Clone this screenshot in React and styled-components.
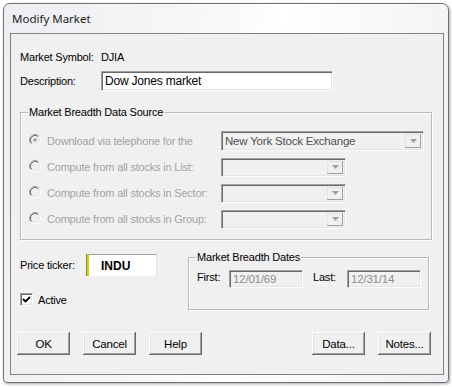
import React from "react";
import styled, { createGlobalStyle } from "styled-components";

const GlobalStyle = createGlobalStyle`
  *, *::before, *::after { box-sizing: border-box; margin: 0; padding: 0; }
  html, body { background: #ffffff; }
  body {
    font-family: "Liberation Sans", Arial, sans-serif;
    font-size: 11px;
    letter-spacing: -0.2px;
    color: #000;
  }
  #root { width: 452px; height: 387px; overflow: hidden; }
`;

const Frame = styled.div`
  margin: 3px 0 0 3px;
  width: 446px;
  height: 380px;
  border: 1px solid #6f6f6f;
  border-radius: 7px 7px 4px 4px;
  background: linear-gradient(100deg, #eceef1 0%, #f8f9fa 45%, #ffffff 55%, #eef0f3 100%);
  box-shadow: 1px 1px 3px rgba(0, 0, 0, 0.35);
  padding: 0 4px 0 6px;
  display: flex;
  flex-direction: column;
`;

const TitleBar = styled.div`
  height: 29px;
  display: flex;
  align-items: center;
  padding-left: 2px;
  font-family: "Noto Sans", "Open Sans", sans-serif;
  font-size: 11.5px;
  letter-spacing: 0;
  color: #1b1b1b;
`;

const Panel = styled.div`
  width: 434px;
  height: 342px;
  border: 1px solid #838383;
  background: #f0f0f0;
  display: flex;
  flex-direction: column;
`;

const Form = styled.div`
  padding-left: 9px;
  display: flex;
  flex-direction: column;
`;

const Row = styled.div`
  display: flex;
  align-items: center;
  height: ${(p) => p.$h || 14}px;
  margin-top: ${(p) => p.$mt || 0}px;
`;

const Label = styled.span`
  width: ${(p) => p.$w}px;
  flex: none;
  white-space: nowrap;
  color: ${(p) => (p.$disabled ? "#a3a3a3" : "#000")};
`;

const sunken = `
  border-style: solid;
  border-width: 1px;
  border-color: #a0a0a0 #ffffff #ffffff #a0a0a0;
  box-shadow: inset 1px 1px 0 #696969, inset -1px -1px 0 #e3e3e3;
`;

const TextBox = styled.div`
  ${sunken}
  width: ${(p) => p.$w}px;
  height: ${(p) => p.$h}px;
  background: ${(p) => (p.$disabled ? "#f0f0f0" : "#ffffff")};
  color: ${(p) => (p.$disabled ? "#8d8d8d" : "#000")};
  display: flex;
  align-items: center;
  padding-left: 3px;
  font-size: ${(p) => (p.$disabled ? 11.5 : 12)}px;
  flex: none;
`;

const GroupBox = styled.div`
  position: relative;
  border: 1px solid #b9b9b9;
  box-shadow: inset 1px 1px 0 #fff, 1px 1px 0 #fff;
  width: ${(p) => p.$w}px;
  height: ${(p) => p.$h}px;
  margin-top: ${(p) => p.$mt || 0}px;
  flex: none;
`;

const Legend = styled.span`
  position: absolute;
  top: -8px;
  left: 7px;
  padding: 0 1px;
  background: #f0f0f0;
  line-height: 14px;
  white-space: nowrap;
`;

const SourceRows = styled.div`
  padding: 18px 0 0 8px;
  display: flex;
  flex-direction: column;
  gap: 6px;
`;

const SourceRow = styled.div`
  display: flex;
  align-items: center;
  height: 20px;
`;

const RadioWrap = styled.span`
  width: 18px;
  height: 12px;
  flex: none;
  display: flex;
  margin-top: -3px;
`;

const Combo = styled.div`
  ${sunken}
  width: ${(p) => p.$w}px;
  height: ${(p) => p.$h}px;
  background: #f0f0f0;
  display: flex;
  align-items: center;
  padding: 2px 2px 2px 3px;
  flex: none;
`;

const ComboText = styled.span`
  flex: 1;
  color: #4f4f4f;
  font-size: 11.5px;
  white-space: nowrap;
`;

const ComboButton = styled.span`
  width: 16px;
  height: 100%;
  background: #f0f0f0;
  box-shadow: inset -1px -1px 0 #a0a0a0, inset 1px 1px 0 #e3e3e3;
  display: flex;
  align-items: center;
  justify-content: center;
  flex: none;
`;

const Bottom = styled.div`
  display: flex;
  align-items: flex-start;
  margin-top: 14px;
`;

const LeftCol = styled.div`
  width: 168px;
  flex: none;
  display: flex;
  flex-direction: column;
`;

const Ticker = styled.div`
  width: 70px;
  height: 22px;
  background: #ffffff;
  border-top: 1px solid #a0a0a0;
  border-right: 1px solid #e3e3e3;
  border-left: 2px solid #d2d20a;
  box-shadow: -1px 0 0 #8a8a30;
  display: flex;
  align-items: center;
  padding-left: 12px;
  font-weight: bold;
  font-size: 12px;
  letter-spacing: 0;
`;

const CheckBox = styled.span`
  ${sunken}
  width: 13px;
  height: 13px;
  background: #fff;
  display: flex;
  align-items: center;
  justify-content: center;
  margin-right: 5px;
  flex: none;
`;

const DatesRow = styled.div`
  display: flex;
  align-items: flex-start;
  padding: 12px 0 0 8px;
`;

const DateLabel = styled.span`
  width: ${(p) => p.$w}px;
  line-height: 14px;
  flex: none;
  margin-left: ${(p) => p.$ml || 0}px;
`;

const ButtonRow = styled.div`
  display: flex;
  gap: 13px;
  padding: 0 12px 0 6px;
  margin-top: 22px;
`;

const Spacer = styled.div`
  flex: 1;
`;

const Button = styled.button`
  width: 53px;
  height: 23px;
  background: #f0f0f0;
  border: none;
  font-family: inherit;
  font-size: 11.5px;
  letter-spacing: -0.2px;
  color: #000;
  box-shadow: inset -1px -1px 0 #696969, inset 1px 1px 0 #ffffff,
    inset -2px -2px 0 #a0a0a0, inset 2px 2px 0 #e3e3e3;
`;

function Radio({ checked }) {
  return (
    <svg width="12" height="12" viewBox="0 0 12 12">
      <circle cx="6" cy="6" r="4" fill="#f0f0f0" />
      <path d="M2.11 9.89 A5.5 5.5 0 0 1 9.89 2.11" stroke="#a0a0a0" fill="none" />
      <path d="M9.89 2.11 A5.5 5.5 0 0 1 2.11 9.89" stroke="#ffffff" fill="none" />
      <path d="M2.82 9.18 A4.5 4.5 0 0 1 9.18 2.82" stroke="#696969" fill="none" />
      <path d="M9.18 2.82 A4.5 4.5 0 0 1 2.82 9.18" stroke="#e3e3e3" fill="none" />
      {checked && <circle cx="6" cy="6" r="1.8" fill="#a0a0a0" />}
    </svg>
  );
}

function Arrow() {
  return (
    <svg width="7" height="4" viewBox="0 0 7 4">
      <path d="M0 0 H7 L3.5 4 Z" fill="#a0a0a0" />
    </svg>
  );
}

function Check() {
  return (
    <svg width="9" height="9" viewBox="0 0 9 9">
      <path d="M1 4 L3.5 6.5 L8 2" stroke="#000" strokeWidth="1.8" fill="none" />
    </svg>
  );
}

const sources = [
  { label: "Download via telephone for the", value: "New York Stock Exchange", w: 203, h: 20, checked: true },
  { label: "Compute from all stocks in List:", value: "", w: 125, h: 19 },
  { label: "Compute from all stocks in Sector:", value: "", w: 125, h: 19 },
  { label: "Compute from all stocks in Group:", value: "", w: 125, h: 19 },
];

export default function App() {
  return (
    <>
      <GlobalStyle />
      <Frame>
        <TitleBar>Modify Market</TitleBar>
        <Panel>
          <Form>
            <Row $mt={16}>
              <Label $w={81}>Market Symbol:</Label>
              <span>DJIA</span>
            </Row>
            <Row $mt={7} $h={20}>
              <Label $w={81}>Description:</Label>
              <TextBox $w={232} $h={20}>Dow Jones market</TextBox>
            </Row>

            <GroupBox $w={412} $h={128} $mt={21}>
              <Legend>Market Breadth Data Source</Legend>
              <SourceRows>
                {sources.map((s) => (
                  <SourceRow key={s.label}>
                    <RadioWrap>
                      <Radio checked={s.checked} />
                    </RadioWrap>
                    <Label $w={174} $disabled>
                      {s.label}
                    </Label>
                    <Combo $w={s.w} $h={s.h}>
                      <ComboText>{s.value}</ComboText>
                      <ComboButton>
                        <Arrow />
                      </ComboButton>
                    </Combo>
                  </SourceRow>
                ))}
              </SourceRows>
            </GroupBox>

            <Bottom>
              <LeftCol>
                <Row $h={22}>
                  <Label $w={67}>Price ticker:</Label>
                  <Ticker>INDU</Ticker>
                </Row>
                <Row $mt={17} $h={13}>
                  <CheckBox>
                    <Check />
                  </CheckBox>
                  <span>Active</span>
                </Row>
              </LeftCol>
              <GroupBox $w={241} $h={53} $mt={3}>
                <Legend>Market Breadth Dates</Legend>
                <DatesRow>
                  <DateLabel $w={32}>First:</DateLabel>
                  <TextBox $w={74} $h={18} $disabled>
                    12/01/69
                  </TextBox>
                  <DateLabel $w={34} $ml={10}>
                    Last:
                  </DateLabel>
                  <TextBox $w={74} $h={18} $disabled>
                    12/31/14
                  </TextBox>
                </DatesRow>
              </GroupBox>
            </Bottom>
          </Form>

          <ButtonRow>
            <Button>OK</Button>
            <Button>Cancel</Button>
            <Button>Help</Button>
            <Spacer />
            <Button>Data...</Button>
            <Button>Notes...</Button>
          </ButtonRow>
        </Panel>
      </Frame>
    </>
  );
}
